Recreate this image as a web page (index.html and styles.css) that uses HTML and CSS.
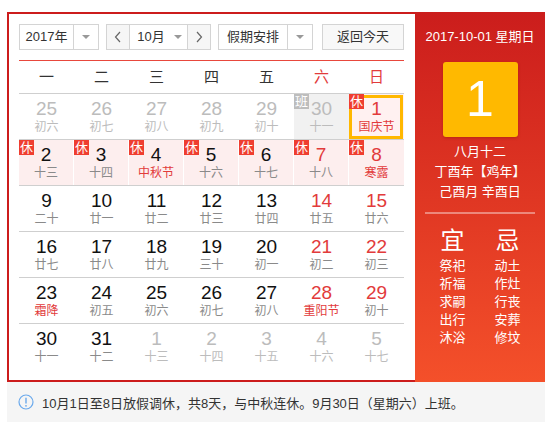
FILE: index.html
```html
<!DOCTYPE html>
<html lang="zh">
<head>
<meta charset="utf-8">
<link rel="stylesheet" href="styles.css">
</head>
<body>
<div class="page">
  <div class="cal">
    <div class="main">
      <div class="controls">
        <div class="select year"><span class="sel-text">2017年</span><span class="sel-arrow"><i class="tri"></i></span></div>
        <div class="month-group">
          <span class="nav"><svg width="8" height="12" viewBox="0 0 8 12"><polyline points="6,1 1.5,6 6,11" fill="none" stroke="#666" stroke-width="1.2"/></svg></span>
          <span class="month"><span>10月</span><i class="tri"></i></span>
          <span class="nav"><svg width="8" height="12" viewBox="0 0 8 12"><polyline points="2,1 6.5,6 2,11" fill="none" stroke="#666" stroke-width="1.2"/></svg></span>
        </div>
        <div class="select holiday"><span class="sel-text">假期安排</span><span class="sel-arrow"><i class="tri"></i></span></div>
        <div class="btn">返回今天</div>
      </div>
      <div class="week">
        <span>一</span><span>二</span><span>三</span><span>四</span><span>五</span><span class="we">六</span><span class="we">日</span>
      </div>
      <div class="row">
        <div class="cell other"><b>25</b><i>初六</i></div>
        <div class="cell other"><b>26</b><i>初七</i></div>
        <div class="cell other"><b>27</b><i>初八</i></div>
        <div class="cell other"><b>28</b><i>初九</i></div>
        <div class="cell other"><b>29</b><i>初十</i></div>
        <div class="cell other work"><span class="badge ban">班</span><b>30</b><i>十一</i></div>
        <div class="cell today rest-bg red"><span class="badge">休</span><b>1</b><i class="fest">国庆节</i></div>
      </div>
      <div class="row rest">
        <div class="cell"><span class="badge">休</span><b>2</b><i>十三</i></div>
        <div class="cell"><span class="badge">休</span><b>3</b><i>十四</i></div>
        <div class="cell"><span class="badge">休</span><b>4</b><i class="fest">中秋节</i></div>
        <div class="cell"><span class="badge">休</span><b>5</b><i>十六</i></div>
        <div class="cell"><span class="badge">休</span><b>6</b><i>十七</i></div>
        <div class="cell red"><span class="badge">休</span><b>7</b><i>十八</i></div>
        <div class="cell red"><span class="badge">休</span><b>8</b><i class="fest">寒露</i></div>
      </div>
      <div class="row">
        <div class="cell"><b>9</b><i>二十</i></div>
        <div class="cell"><b>10</b><i>廿一</i></div>
        <div class="cell"><b>11</b><i>廿二</i></div>
        <div class="cell"><b>12</b><i>廿三</i></div>
        <div class="cell"><b>13</b><i>廿四</i></div>
        <div class="cell red"><b>14</b><i>廿五</i></div>
        <div class="cell red"><b>15</b><i>廿六</i></div>
      </div>
      <div class="row">
        <div class="cell"><b>16</b><i>廿七</i></div>
        <div class="cell"><b>17</b><i>廿八</i></div>
        <div class="cell"><b>18</b><i>廿九</i></div>
        <div class="cell"><b>19</b><i>三十</i></div>
        <div class="cell"><b>20</b><i>初一</i></div>
        <div class="cell red"><b>21</b><i>初二</i></div>
        <div class="cell red"><b>22</b><i>初三</i></div>
      </div>
      <div class="row">
        <div class="cell"><b>23</b><i class="fest">霜降</i></div>
        <div class="cell"><b>24</b><i>初五</i></div>
        <div class="cell"><b>25</b><i>初六</i></div>
        <div class="cell"><b>26</b><i>初七</i></div>
        <div class="cell"><b>27</b><i>初八</i></div>
        <div class="cell red"><b>28</b><i class="fest">重阳节</i></div>
        <div class="cell red"><b>29</b><i>初十</i></div>
      </div>
      <div class="row">
        <div class="cell"><b>30</b><i>十一</i></div>
        <div class="cell"><b>31</b><i>十二</i></div>
        <div class="cell other"><b>1</b><i>十三</i></div>
        <div class="cell other"><b>2</b><i>十四</i></div>
        <div class="cell other"><b>3</b><i>十五</i></div>
        <div class="cell other"><b>4</b><i>十六</i></div>
        <div class="cell other"><b>5</b><i>十七</i></div>
      </div>
    </div>
    <div class="side">
      <div class="side-date">2017-10-01 星期日</div>
      <div class="big-day">1</div>
      <div class="lunar">
        <div>八月十二</div>
        <div>丁酉年【鸡年】</div>
        <div>己酉月 辛酉日</div>
      </div>
      <div class="divider"></div>
      <div class="yiji">
        <div class="col">
          <div class="yj-title">宜</div>
          <div>祭祀</div><div>祈福</div><div>求嗣</div><div>出行</div><div>沐浴</div>
        </div>
        <div class="col">
          <div class="yj-title">忌</div>
          <div>动土</div><div>作灶</div><div>行丧</div><div>安葬</div><div>修坟</div>
        </div>
      </div>
    </div>
  </div>
  <div class="notice">
    <svg class="info" width="16" height="16" viewBox="0 0 16 16"><circle cx="8" cy="8" r="7" fill="none" stroke="#6aa9ec" stroke-width="1.2"/><line x1="8" y1="3.8" x2="8" y2="9.5" stroke="#6aa9ec" stroke-width="1.4"/><circle cx="8" cy="11.8" r="0.9" fill="#6aa9ec"/></svg>
    <span>10月1日至8日放假调休，共8天，与中秋连休。9月30日（星期六）上班。</span>
  </div>
</div>
</body>
</html>
```

FILE: styles.css
```css
* { box-sizing: border-box; }
body {
  margin: 0;
  background: #fff;
  font-family: "Liberation Sans", "Noto Sans CJK SC", sans-serif;
  color: #333;
}
.page {
  padding: 12px 0 0 7px;
  width: 545px;
}
.cal {
  display: flex;
  width: 538px;
}
.main {
  width: 408px;
  border: 2px solid #cc1c1c;
  border-right: none;
  padding: 10px 11px 10px 10px;
}
.controls {
  display: flex;
  height: 26px;
  font-size: 13px;
  color: #333;
}
.select {
  display: flex;
  border: 1px solid #d4d4d4;
  height: 26px;
}
.year { width: 80px; }
.holiday { width: 95px; margin-left: 7px; }
.sel-text {
  flex: 1;
  text-align: center;
  line-height: 24px;
  border-right: 1px solid #d4d4d4;
}
.sel-arrow {
  width: 24px;
  display: flex;
  align-items: center;
  justify-content: center;
}
.tri {
  display: inline-block;
  width: 0; height: 0;
  border-left: 4px solid transparent;
  border-right: 4px solid transparent;
  border-top: 4px solid #999;
}
.month-group {
  display: flex;
  margin-left: 7px;
  width: 105px;
  height: 26px;
  border: 1px solid #d4d4d4;
}
.nav {
  width: 22px;
  background: #f6f6f6;
  display: flex;
  align-items: center;
  justify-content: center;
}
.month {
  flex: 1;
  border-left: 1px solid #d4d4d4;
  border-right: 1px solid #d4d4d4;
  display: flex;
  align-items: center;
  justify-content: center;
  gap: 9px;
  line-height: 24px;
  padding-left: 2px;
}
.btn {
  margin-left: 9px;
  width: 82px;
  height: 26px;
  border: 1px solid #d4d4d4;
  background: #f8f8f8;
  text-align: center;
  line-height: 24px;
}
.week {
  margin-top: 10px;
  border-top: 1px solid #e8473c;
  display: grid;
  grid-template-columns: repeat(7, 55px);
  height: 33px;
  font-size: 15px;
  line-height: 32px;
  text-align: center;
  color: #333;
}
.week .we { color: #e23b3b; }
.row {
  display: grid;
  grid-template-columns: repeat(7, 55px);
  border-top: 1px solid #cfcfcf;
  height: 46px;
}
.cell {
  position: relative;
  height: 45px;
  text-align: center;
  padding-top: 5px;
}
.cell b {
  display: block;
  font-weight: normal;
  font-size: 19px;
  line-height: 20px;
  color: #111;
}
.cell i {
  display: block;
  font-style: normal;
  font-size: 12px;
  line-height: 17px;
  color: #8a8a8a;
}
.cell.red b { color: #e23b3b; }
.cell i.fest { color: #e23b3b; }
.cell.other b, .cell.other i { color: #bcbcbc; }
.cell.work { background: #f1f1f1; }
.rest .cell {
  background: #fdeeee;
  border-right: 1px solid #fff;
}
.rest .cell:last-child { border-right: none; }
.rest-bg { background: #fff1f1; }
.today::after {
  content: "";
  position: absolute;
  top: 1px; left: 0; right: 1px; bottom: 0;
  border: 3px solid #ffb800;
}
.badge {
  position: absolute;
  top: 0; left: 0;
  z-index: 1;
  width: 15px;
  height: 15px;
  background: #ef3e30;
  color: #fff;
  font-size: 13px;
  line-height: 15px;
  text-align: center;
}
.badge.ban { background: #bdbdbd; }
.side {
  width: 130px;
  height: 370px;
  background: linear-gradient(to bottom, #cb1d1c, #f4502a);
  color: #fff;
  text-align: center;
  padding-top: 16px;
}
.side-date {
  font-size: 13px;
  line-height: 18px;
}
.big-day {
  width: 75px;
  height: 75px;
  margin: 16px auto 0;
  background: #ffb900;
  border-radius: 3px;
  box-shadow: 0 1px 3px rgba(120, 20, 0, 0.35);
  font-size: 50px;
  line-height: 75px;
  color: #fff;
}
.lunar {
  margin-top: 5px;
  font-size: 13px;
  line-height: 20px;
}
.divider {
  margin: 10px 10px 0;
  height: 2px;
  background: rgba(255, 255, 255, 0.4);
}
.yiji {
  display: flex;
  justify-content: center;
  margin-top: 12px;
  font-size: 13px;
  line-height: 18px;
}
.col { width: 55px; }
.yj-title {
  font-size: 24px;
  line-height: 30px;
  margin-bottom: 1px;
}
.notice {
  width: 538px;
  height: 40px;
  background: #f5f5f5;
  display: flex;
  align-items: center;
  padding-left: 11px;
  font-size: 13px;
  color: #333;
}
.info { margin-right: 8px; flex: none; }
```
